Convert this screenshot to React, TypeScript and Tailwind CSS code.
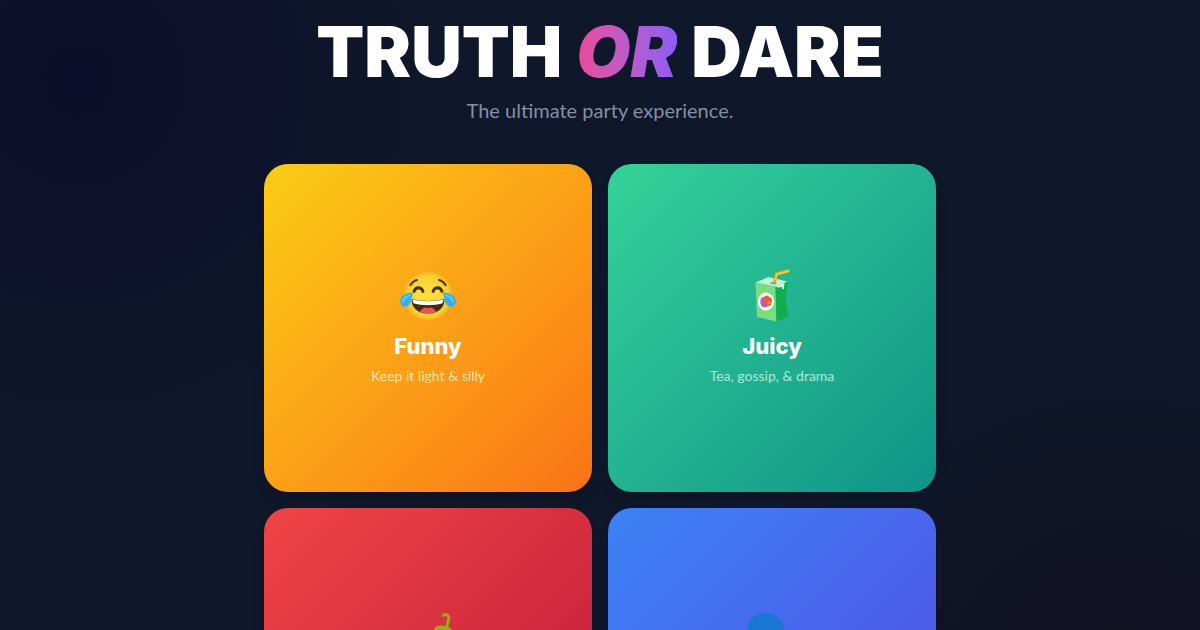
import type { ReactNode } from 'react';

interface Category {
  id: string;
  title?: string;
  tagline?: string;
  gradient: string;
  taglineColor?: string;
  icon: ReactNode;
}

function JoyIcon() {
  return (
    <svg viewBox="0 0 56 56" className="size-14 shrink-0" aria-hidden="true">
      <defs>
        <radialGradient id="joyFace" cx="50%" cy="50%" r="50%">
          <stop offset="0.5" stopColor="#fbdc38" />
          <stop offset="0.85" stopColor="#f7cd30" />
          <stop offset="1" stopColor="#efbb24" />
        </radialGradient>
      </defs>
      <circle cx="28" cy="30" r="24" fill="url(#joyFace)" />
      <path d="M10.500 19c1.500-2.500 3.500-4.200 6.500-5M45.500 19c-1.500-2.500-3.500-4.200-6.500-5" fill="none" stroke="#5b3a10" strokeWidth="2.200" strokeLinecap="round" />
      <path d="M14 25.500c1.500-5 7.500-5 9 0M33 25.500c1.500-5 7.500-5 9 0" fill="none" stroke="#4a2f0d" strokeWidth="2.800" strokeLinecap="round" />
      <path d="M11.500 33c10.500 2.500 22.500 2.500 33 0 .5 8.500-6.500 14.500-16.500 14.500S11 41.500 11.500 33z" fill="#422b0d" />
      <path d="M12.500 33.500c10 2.200 21 2.200 31 0 0 2-.6 3.200-1.400 4-9 2.200-19.200 2.200-28.200 0-.8-.8-1.400-2-1.400-4z" fill="#fff" />
      <path d="M20 45.500c2.500-4.500 6.500-4.500 8-3.200 1.500-1.300 5.500-1.300 8 3.200-5 2.700-11 2.700-16 0z" fill="#ef5350" />
      <path d="M13 26.500C6 26.500.2 30 .2 35c0 3.800 2.600 6 5.500 5.800 5.200-.6 5.800-7.500 7.300-14.300z" fill="#35aef2" />
      <path d="M43 26.500c7 0 12.800 3.500 12.800 8.500 0 3.800-2.600 6-5.500 5.800-5.200-.6-5.800-7.500-7.300-14.300z" fill="#35aef2" />
      <path d="M9.500 29.500c-4 1-6.200 3-6.200 6M46.500 29.500c4 1 6.200 3 6.200 6" fill="none" stroke="#6ccbfa" strokeWidth="1.800" strokeLinecap="round" />
    </svg>
  );
}

function JuiceIcon() {
  return (
    <svg viewBox="0 0 56 56" className="size-14 shrink-0" aria-hidden="true">
      <path d="M11.500 16.500L31.500 20.500 32.500 55.500 13 51z" fill="#7ddc80" />
      <path d="M31.500 20.500L43.500 15.500 42 35l2.500 15.500-12 5z" fill="#0fae4f" />
      <path d="M11.500 16.500L24.500 11 43.500 15.500 31.500 20.500z" fill="#c2f3d2" />
      <path d="M31.500 20.500l9-3.800-.6 6.300c-1.400.6-2-.5-2-2.200-2 .9-4.200 1-6.400-.3z" fill="#d8fae4" />
      <path d="M27 16l6 1.200-2 1.300-5-1z" fill="#5aa777" />
      <ellipse cx="22" cy="35.500" rx="8.200" ry="9" fill="#fff" />
      <path d="M17 32.500c1.500-2.500 4.500-2 5.500 1l.5 7c-2.500 2.200-5.800.5-6.500-3-.4-2-.2-3.500.5-5z" fill="#ab62c8" />
      <path d="M20.500 30.500c2-2 4.200-1 4.500.5 2.800.8 3.800 3 2.500 5 .5 2.500-1.200 4.500-3.500 4-2 1.500-3-.5-2.500-2.500-1.500-2.300-2-4.800-1-7z" fill="#f4572b" />
      <path d="M23.500 36c1-1.500 3-1 3 .8s-2 2.500-3 1.200z" fill="#ff8a3c" />
      <path d="M30.500 17l1.500-9L45.500 4.500" fill="none" stroke="#d9ae1c" strokeWidth="3" strokeLinejoin="round" />
      <path d="M31.500 14l1.200-5.500L45 5" fill="none" stroke="#fbd335" strokeWidth="1.400" strokeLinejoin="round" />
    </svg>
  );
}

function ChiliIcon() {
  return (
    <svg viewBox="0 4 56 56" className="size-14 shrink-0" aria-hidden="true">
      <path d="M34 24c-7 0-11 4-12 10-1 7-7 12-18 14 15 7 34 3 42-9 5-8 6-13 4-17z" fill="#f44336" />
      <path d="M33 26c0-2 1-3 2.500-4l4 1-2 4z" fill="#ff7043" />
      <path d="M34.500 22c2-2.200 5-2.600 9-2.300 4.500.3 8 2 9.500 6.300-3-1-5-.5-7 1.500-2-2.500-4.500-3-7.500-2-1-2-2-3-4-3.500z" fill="#96ad1e" />
      <path d="M43 9.500c4-2.500 6.500.5 5.500 4.500-.7 2.500-1.500 4-1.500 7" fill="none" stroke="#96ad1e" strokeWidth="2.800" strokeLinecap="round" />
    </svg>
  );
}

function TalkIcon() {
  return (
    <svg viewBox="0 4 56 56" className="size-14 shrink-0" aria-hidden="true">
      <path d="M22 7C11 7 3 14 3 25c0 8 4 11 6 15v12h19v-6h6c3 0 4-2 4-5v-4l4-2-2-8C41 14 33 7 22 7z" fill="#1976d2" />
      <path d="M46 32l6-3M47 37h7M46 42l6 3" stroke="#1976d2" strokeWidth="2.500" strokeLinecap="round" />
    </svg>
  );
}

const categories: Category[] = [
  {
    id: 'funny',
    title: 'Funny',
    tagline: 'Keep it light & silly',
    gradient: 'from-[#facc15] to-[#f97316]',
    taglineColor: 'text-[#fee5a8]',
    icon: <JoyIcon />,
  },
  {
    id: 'juicy',
    title: 'Juicy',
    tagline: 'Tea, gossip, & drama',
    gradient: 'from-[#34d399] to-[#0d9488]',
    taglineColor: 'text-[#a9ebd6]',
    icon: <JuiceIcon />,
  },
  {
    id: 'spicy',
    gradient: 'from-[#ef4444] to-[#be123c]',
    icon: <ChiliIcon />,
  },
  {
    id: 'deep',
    gradient: 'from-[#3b82f6] to-[#4f46e5]',
    icon: <TalkIcon />,
  },
];

function CategoryCard({ category }: { category: Category }) {
  return (
    <button
      type="button"
      aria-label={category.title ?? category.id}
      className={`flex aspect-square flex-col items-center justify-center rounded-3xl bg-linear-to-br shadow-lg ${category.gradient}`}
    >
      <span className="mb-3 flex h-12 items-center justify-center">{category.icon}</span>
      <span className="flex min-h-14 flex-col items-center gap-1">
        {category.title && (
          <span className="font-['Inter','Lato',sans-serif] text-[22px] leading-8 font-extrabold text-white">{category.title}</span>
        )}
        {category.tagline && <span className={`text-sm ${category.taglineColor}`}>{category.tagline}</span>}
      </span>
    </button>
  );
}

export default function App() {
  return (
    <main className="min-h-screen bg-[#0f172a] bg-[radial-gradient(circle_at_80px_80px,#0c0f2b_0,#0d112a_140px,transparent_340px),radial-gradient(circle_at_1120px_700px,#110f20_0,#101223_120px,transparent_320px)] px-4 pt-4 pb-10 font-['Lato',sans-serif]">
      <div className="mx-auto max-w-2xl">
        <header className="mb-10 text-center">
          <h1 className="mb-2 font-['Inter','Lato',sans-serif] text-[70px] leading-[72px] font-black whitespace-nowrap text-white">
            TRUTH{' '}
            <span className="bg-linear-to-r from-[#ec4899] to-[#8b5cf6] bg-clip-text text-transparent italic">OR</span>{' '}
            DARE
          </h1>
          <p className="text-xl text-[#8490a4]">The ultimate party experience.</p>
        </header>
        <div className="grid grid-cols-2 gap-4">
          {categories.map((c) => (
            <CategoryCard key={c.id} category={c} />
          ))}
        </div>
      </div>
    </main>
  );
}
